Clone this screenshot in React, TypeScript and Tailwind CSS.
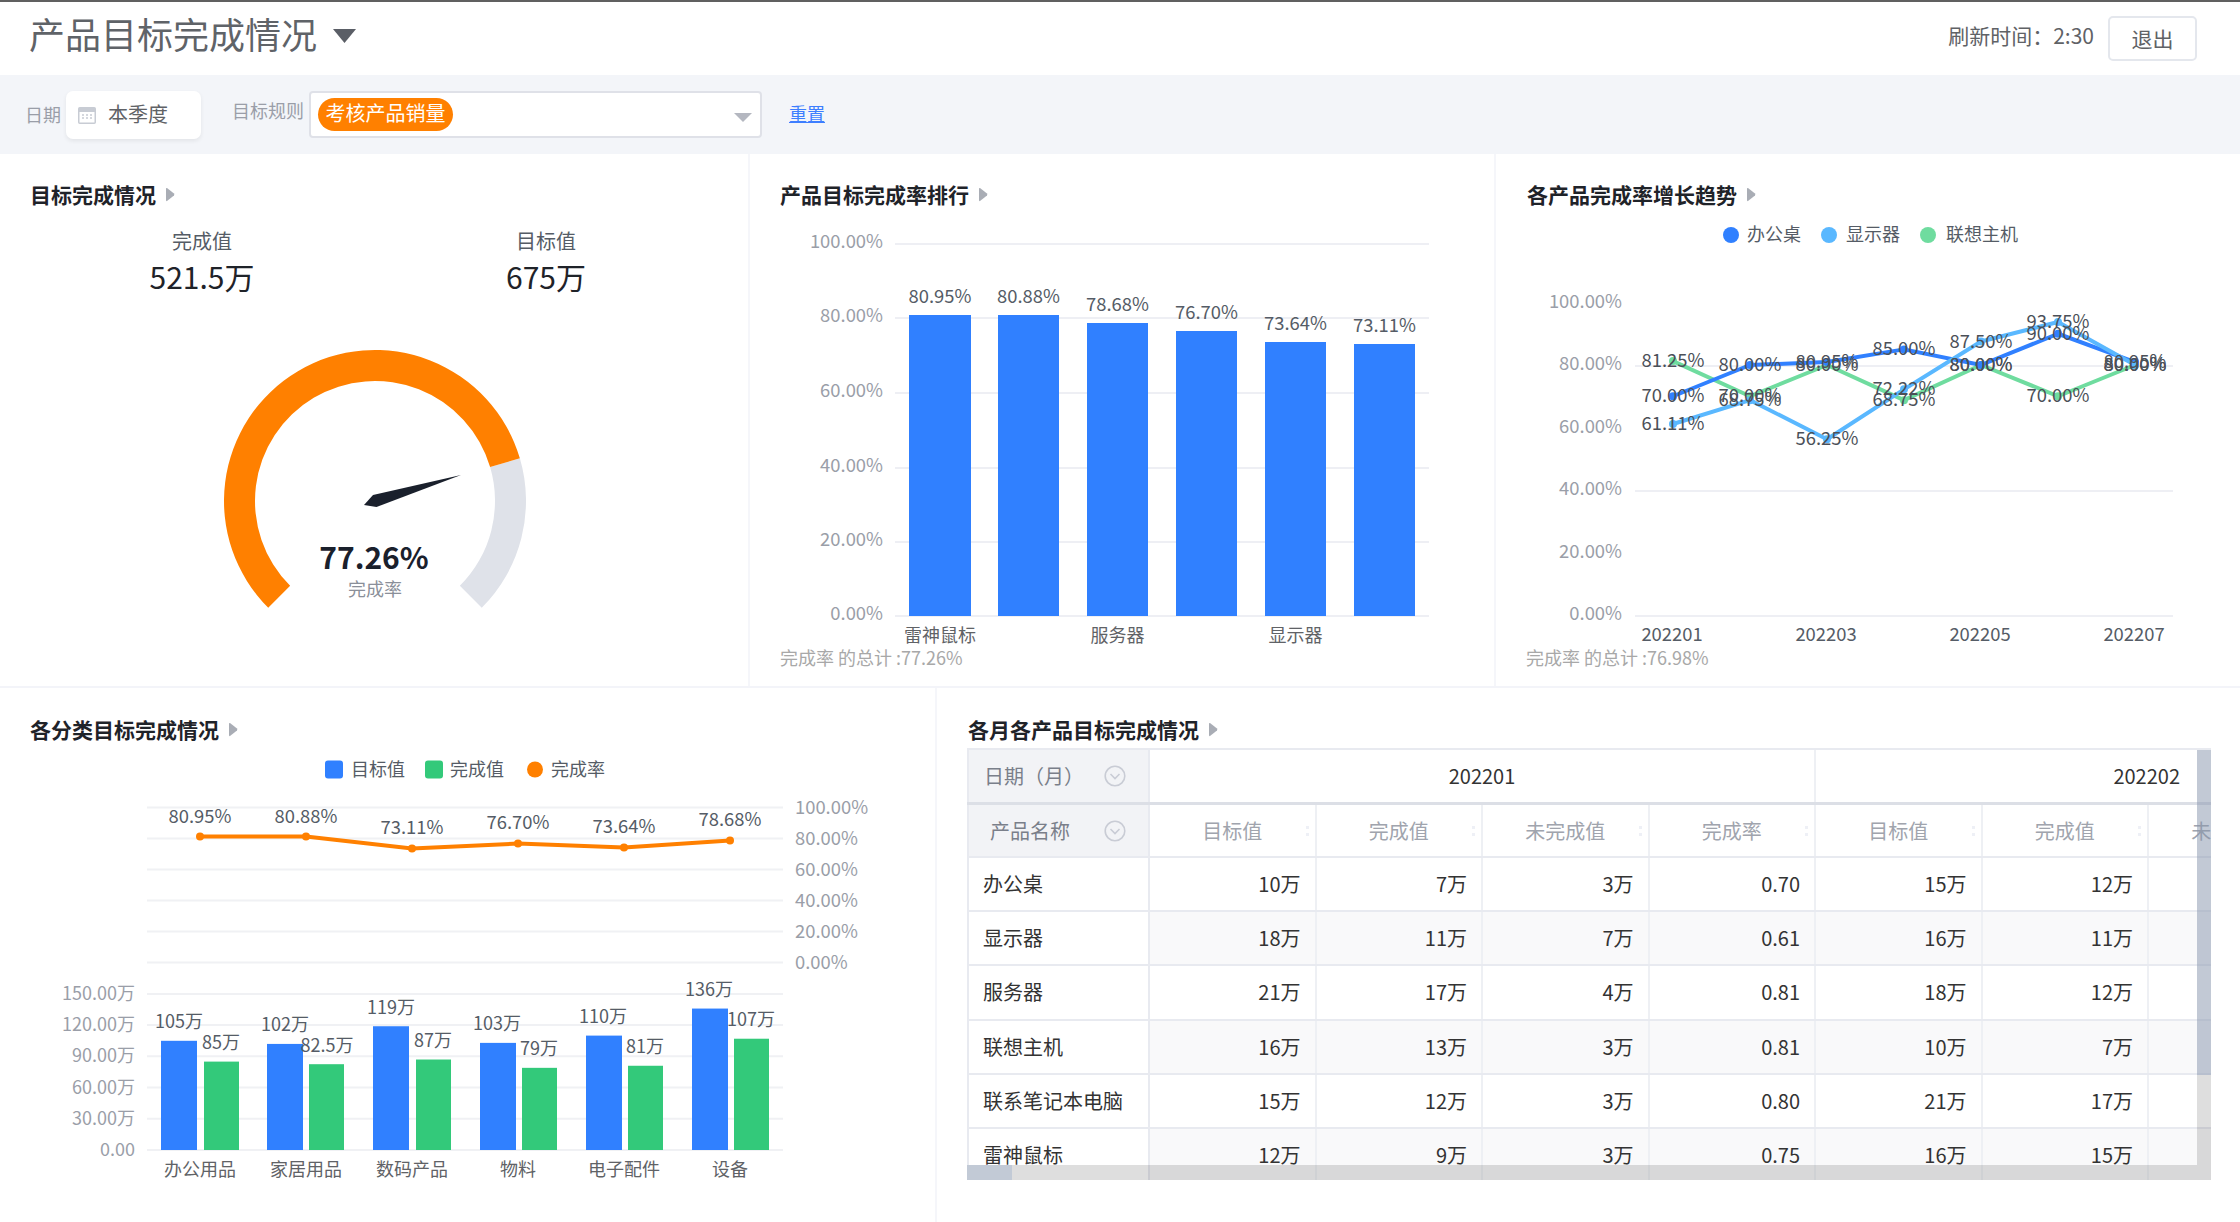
import React from "react";

const BLUE = "#3080ff";
const SKY = "#5ab8ff";
const MINT = "#6fdc9f";
const GREEN = "#33c97a";
const ORANGE = "#ff8000";

function Caret() {
  return (
    <svg width="9" height="15" viewBox="0 0 9 15" className="ml-[10px] shrink-0">
      <path d="M1 1 L8 6.5 Q8.6 7.5 8 8.5 L1 14 Q0 14.5 0 13 V2 Q0 .5 1 1 Z" fill="#a9adb5" />
    </svg>
  );
}

function PanelTitle({ title, className }: { title: string; className: string }) {
  return (
    <div className={`flex items-center h-[30px] pb-[4px] text-[21px] leading-[26px] font-bold text-[#1f2329] ${className}`}>
      <span>{title}</span>
      <Caret />
    </div>
  );
}

function Txt({ x, y, children, anchor = "middle", size = 18, fill = "#555c66", weight }: { x: number; y: number; children: React.ReactNode; anchor?: "start" | "middle" | "end"; size?: number; fill?: string; weight?: number }) {
  return (
    <text x={x} y={y - 2} textAnchor={anchor} dominantBaseline="central" fontSize={size} fill={fill} fontWeight={weight}>
      {children}
    </text>
  );
}

function polar(cx: number, cy: number, r: number, deg: number) {
  const a = (deg * Math.PI) / 180;
  return [cx + r * Math.cos(a), cy - r * Math.sin(a)];
}

function arc(from: number, to: number) {
  const [cx, cy, R, r] = [375, 501, 151, 120];
  const [x1, y1] = polar(cx, cy, R, from);
  const [x2, y2] = polar(cx, cy, R, to);
  const [x3, y3] = polar(cx, cy, r, to);
  const [x4, y4] = polar(cx, cy, r, from);
  const large = from - to > 180 ? 1 : 0;
  return `M${x1} ${y1} A${R} ${R} 0 ${large} 1 ${x2} ${y2} L${x3} ${y3} A${r} ${r} 0 ${large} 0 ${x4} ${y4} Z`;
}

function Gauge() {
  return (
    <svg width="748" height="388" viewBox="0 298 748 388">
      <path d={arc(16.4, -45)} fill="#dfe2e9" />
      <path d={arc(225, 16.4)} fill={ORANGE} />
      <polygon points="461,475 373,495 364,505 376.5,507" fill="#1a202c" />
      <Txt x={374} y={558} size={30} weight={700} fill="#1a202c">77.26%</Txt>
      <Txt x={375} y={590} fill="#8a8f99">完成率</Txt>
    </svg>
  );
}

const rankBars = [
  { x: 909, w: 62, top: 315, label: "80.95%", ly: 297, name: "雷神鼠标" },
  { x: 998, w: 61, top: 315, label: "80.88%", ly: 297 },
  { x: 1087, w: 61, top: 323, label: "78.68%", ly: 305, name: "服务器" },
  { x: 1176, w: 61, top: 331, label: "76.70%", ly: 313 },
  { x: 1265, w: 61, top: 342, label: "73.64%", ly: 324, name: "显示器" },
  { x: 1354, w: 61, top: 344, label: "73.11%", ly: 326 },
];

function RankChart() {
  const ticks = [
    [244, "100.00%"],
    [318, "80.00%"],
    [393, "60.00%"],
    [468, "40.00%"],
    [542, "20.00%"],
    [616, "0.00%"],
  ] as const;
  return (
    <svg width="744" height="475" viewBox="750 211 744 475">
      {ticks.map(([y, t]) => (
        <g key={t}>
          <line x1={895} x2={1429} y1={y} y2={y} stroke="#eeeff4" strokeWidth={2} />
          <Txt x={883} y={y - 2.5} anchor="end" size={18.4} fill="#9a9ea8">{t}</Txt>
        </g>
      ))}
      {rankBars.map((b) => (
        <g key={b.x}>
          <rect x={b.x} y={b.top} width={b.w} height={616 - b.top} fill={BLUE} />
          <Txt x={b.x + b.w / 2} y={b.ly} size={18.4}>{b.label}</Txt>
          {b.name && <Txt x={b.x + b.w / 2} y={636} fill="#606266">{b.name}</Txt>}
        </g>
      ))}
      <Txt x={780} y={659} anchor="start" fill="#a8a8a8">完成率 的总计 :77.26%</Txt>
    </svg>
  );
}

const months = [1673, 1750, 1827, 1904, 1981, 2058, 2135];
const series = [
  { color: MINT, values: [81.25, 70, 80, 68.75, 80, 70, 80] },
  { color: BLUE, values: [70, 80, 80.95, 85, 80, 90, 80.95] },
  { color: SKY, values: [61.11, 68.75, 56.25, 72.22, 87.5, 93.75, 80] },
];

function TrendChart() {
  const y = (v: number) => 616 - v * 3.125;
  const ticks = [
    [100, "100.00%"],
    [80, "80.00%"],
    [60, "60.00%"],
    [40, "40.00%"],
    [20, "20.00%"],
    [0, "0.00%"],
  ] as const;
  return (
    <svg width="744" height="475" viewBox="1496 211 744 475">
      <circle cx={1731} cy={235} r={8} fill={BLUE} />
      <Txt x={1747} y={235} anchor="start">办公桌</Txt>
      <circle cx={1829} cy={235} r={8} fill={SKY} />
      <Txt x={1846} y={235} anchor="start">显示器</Txt>
      <circle cx={1928} cy={235} r={8} fill={MINT} />
      <Txt x={1946} y={235} anchor="start">联想主机</Txt>
      {ticks.map(([v, t]) => (
        <g key={t}>
          {(v === 80 || v === 40 || v === 0) && <line x1={1635} x2={2173} y1={y(v)} y2={y(v)} stroke="#eeeff4" strokeWidth={2} />}
          <Txt x={1622} y={y(v) - 2} anchor="end" size={18.4} fill="#9a9ea8">{t}</Txt>
        </g>
      ))}
      {series.map((s) => (
        <g key={s.color}>
          <polyline points={s.values.map((v, i) => `${months[i]},${y(v) - 1}`).join(" ")} fill="none" stroke={s.color} strokeWidth={4} strokeLinejoin="round" />
          {s.values.map((v, i) => (
            <circle key={i} cx={months[i]} cy={y(v) - 1} r={4} fill={s.color} />
          ))}
        </g>
      ))}
      {series.map((s) =>
        s.values.map((v, i) => (
          <Txt key={s.color + i} x={months[i]} y={y(v) - 1} size={18.4} fill="#4b5058">{v.toFixed(2)}%</Txt>
        ))
      )}
      {[0, 2, 4, 6].map((i) => (
        <Txt key={i} x={months[i] - 1} y={635} size={18.4} fill="#555c66">{`20220${i + 1}`}</Txt>
      ))}
      <Txt x={1526} y={659} anchor="start" fill="#a8a8a8">完成率 的总计 :76.98%</Txt>
    </svg>
  );
}

const cats = [
  { name: "办公用品", cx: 200, bx: 161, gx: 204, target: 105, done: 85, doneText: "85万", rate: "80.95%", ry: 838, rl: 818, tl: 179, dl: 221 },
  { name: "家居用品", cx: 306, bx: 267, gx: 309, target: 102, done: 82.5, doneText: "82.5万", rate: "80.88%", ry: 838, rl: 818, tl: 285, dl: 327 },
  { name: "数码产品", cx: 412, bx: 373, gx: 416, target: 119, done: 87, doneText: "87万", rate: "73.11%", ry: 850, rl: 829, tl: 391, dl: 433 },
  { name: "物料", cx: 518, bx: 480, gx: 522, target: 103, done: 79, doneText: "79万", rate: "76.70%", ry: 845, rl: 824, tl: 497, dl: 539 },
  { name: "电子配件", cx: 624, bx: 586, gx: 628, target: 110, done: 81, doneText: "81万", rate: "73.64%", ry: 849, rl: 828, tl: 603, dl: 645 },
  { name: "设备", cx: 730, bx: 692, gx: 734, target: 136, done: 107, doneText: "107万", rate: "78.68%", ry: 842, rl: 821, tl: 709, dl: 751 },
];

function ComboChart() {
  const base = 1151.5;
  const h = (v: number) => v * 1.04;
  const top = [
    [809, "100.00%"],
    [840, "80.00%"],
    [871, "60.00%"],
    [902, "40.00%"],
    [933, "20.00%"],
    [964, "0.00%"],
  ] as const;
  const left = [
    [995.5, "150.00万"],
    [1026.6, "120.00万"],
    [1057.8, "90.00万"],
    [1089, "60.00万"],
    [1120.2, "30.00万"],
    [1151.5, "0.00"],
  ] as const;
  return (
    <svg width="935" height="476" viewBox="0 747.5 935 476">
      <rect x={325} y={762} width={18} height={18} rx={3} fill={BLUE} />
      <Txt x={351} y={771} anchor="start">目标值</Txt>
      <rect x={425} y={762} width={18} height={18} rx={3} fill={GREEN} />
      <Txt x={450} y={771} anchor="start">完成值</Txt>
      <circle cx={535} cy={771} r={8} fill={ORANGE} />
      <Txt x={551} y={771} anchor="start">完成率</Txt>
      {top.map(([y, t]) => (
        <g key={t}>
          <line x1={147} x2={783} y1={y} y2={y} stroke="#f0f1f4" strokeWidth={2} />
          <Txt x={795} y={y} anchor="start" size={18.4} fill="#9a9ea8">{t}</Txt>
        </g>
      ))}
      {left.map(([y, t]) => (
        <g key={t}>
          <line x1={147} x2={783} y1={y} y2={y} stroke="#f0f1f4" strokeWidth={2} />
          <Txt x={135} y={y} anchor="end" fill="#9a9ea8">{t}</Txt>
        </g>
      ))}
      <polyline points={cats.map((c) => `${c.cx},${c.ry}`).join(" ")} fill="none" stroke={ORANGE} strokeWidth={4} />
      {cats.map((c) => (
        <g key={c.name}>
          <circle cx={c.cx} cy={c.ry} r={4} fill={ORANGE} />
          <Txt x={c.cx} y={c.rl} size={18.4}>{c.rate}</Txt>
          <rect x={c.bx} y={base - h(c.target)} width={36} height={h(c.target)} fill={BLUE} />
          <rect x={c.gx} y={base - h(c.done)} width={35} height={h(c.done)} fill={GREEN} />
          <Txt x={c.tl} y={base - h(c.target) - 18.5}>{`${c.target}万`}</Txt>
          <Txt x={c.dl} y={base - h(c.done) - 18.5}>{c.doneText}</Txt>
          <Txt x={c.cx} y={1171.5} fill="#606266">{c.name}</Txt>
        </g>
      ))}
    </svg>
  );
}

function CircleChevron() {
  return (
    <svg width="22" height="22" viewBox="0 0 22 22" className="absolute right-[22px] top-1/2 -translate-y-1/2">
      <circle cx="11" cy="11" r="9.8" fill="none" stroke="#c9ccd5" strokeWidth="1.6" />
      <path d="M6.5 9 L11 13.5 L15.5 9" fill="none" stroke="#c9ccd5" strokeWidth="1.6" />
    </svg>
  );
}

const rows = [
  ["办公桌", "10万", "7万", "3万", "0.70", "15万", "12万"],
  ["显示器", "18万", "11万", "7万", "0.61", "16万", "11万"],
  ["服务器", "21万", "17万", "4万", "0.81", "18万", "12万"],
  ["联想主机", "16万", "13万", "3万", "0.81", "10万", "7万"],
  ["联系笔记本电脑", "15万", "12万", "3万", "0.80", "21万", "17万"],
  ["雷神鼠标", "12万", "9万", "3万", "0.75", "16万", "15万"],
];
const heads = ["目标值", "完成值", "未完成值", "完成率", "目标值", "完成值", "未完成值"];

function PivotTable() {
  return (
    <div className="relative mt-[2px] ml-[30px] w-[1244px] h-[432px] overflow-hidden border-t-2 border-[#e8eaf0] text-[20px] text-[#333]">
      <div className="flex h-[55px] border-b-[3px] border-[#dcdfe6]">
        <div className="relative flex items-center w-[183px] shrink-0 pl-[15px] bg-[#f2f3f6] border-l-2 border-r-2 border-[#e8eaf0] text-[#7a7f8a]">
          日期（月）
          <CircleChevron />
        </div>
        <div className="flex items-center justify-center w-[666px] shrink-0 border-r-2 border-[#eef0f4] text-[#333]">202201</div>
        <div className="flex items-center justify-end flex-1 pr-[31px] text-[#333]">202202</div>
      </div>
      <div className="flex h-[53px] border-b-2 border-[#e8eaf0]">
        <div className="relative flex items-center w-[183px] shrink-0 pl-[21px] bg-[#f2f3f6] border-l-2 border-r-2 border-[#e8eaf0] text-[#7a7f8a]">
          产品名称
          <CircleChevron />
        </div>
        {heads.map((t, i) => (
          <div key={i} className="relative flex items-center justify-center w-[166.5px] shrink-0 border-r-2 border-[#eef0f4] text-[#a0a4ad] whitespace-nowrap">
            {t}
            <span className="absolute right-[6px] top-1/2 -translate-y-1/2 flex flex-col gap-[4px]">
              <i className="block w-[3px] h-[3px] bg-[#eef0f6]" />
              <i className="block w-[3px] h-[3px] bg-[#eef0f6]" />
            </span>
          </div>
        ))}
      </div>
      {rows.map((r, ri) => (
        <div key={r[0]} className="flex h-[54.2px] border-b-2 border-[#e8eaf0]">
          <div className="flex items-center w-[183px] shrink-0 pl-[14px] bg-white border-l-2 border-r-2 border-[#e8eaf0]">{r[0]}</div>
          {r.slice(1).map((v, i) => (
            <div key={i} className={`flex items-center justify-end w-[166.5px] shrink-0 pr-[14px] border-r-2 border-[#eef0f4] ${ri % 2 === 1 ? "bg-[#f9f9fa]" : "bg-white"}`}>{v}</div>
          ))}
          <div className={`w-[166.5px] shrink-0 ${ri % 2 === 1 ? "bg-[#f9f9fa]" : "bg-white"}`} />
        </div>
      ))}
      {/* scrollbars sit on top of the table */}
      <div className="absolute left-0 right-0 bottom-0 h-[15px] bg-black/[0.13]">
        <div className="w-[45px] h-full bg-[#c2cad6]" />
      </div>
      <div className="absolute right-0 top-0 bottom-[15px] w-[14px] flex flex-col">
        <div className="h-[325px] bg-[#8593ab]/50" />
        <div className="flex-1 bg-black/[0.13]" />
      </div>
    </div>
  );
}

export default function App() {
  return (
    <div className="w-[2240px] h-[1222px] flex flex-col overflow-hidden bg-white font-['Noto_Sans_CJK_SC','Noto_Sans',sans-serif]">
      {/* Header */}
      <header className="flex items-center justify-between h-[75px] border-t-2 border-[#606060] shrink-0">
        <div className="flex items-center pl-[29px] pb-[12px] text-[36px] text-[#5f6368]">
          产品目标完成情况
          <svg width="23" height="14" viewBox="0 0 23 14" className="ml-[16px] mt-[6px]">
            <polygon points="0,0 23,0 11.5,14" fill="#5a5e66" />
          </svg>
        </div>
        <div className="flex items-center pr-[43px]">
          <span className="text-[21px] text-[#606266] pb-[5px]">刷新时间：2:30</span>
          <button className="ml-[14px] w-[89px] h-[45px] border-2 border-[#e4e7ed] rounded-[5px] text-[21px] text-[#606266]">退出</button>
        </div>
      </header>

      {/* Filter bar */}
      <div className="flex items-center h-[79px] shrink-0 pl-[25px] bg-[#f3f5f9]">
        <span className="text-[18px] text-[#9a9ea8]">日期</span>
        <div className="flex items-center ml-[5px] w-[135px] h-[48px] pl-[12px] bg-white rounded-[7px] shadow-[0_2px_4px_rgba(0,0,0,0.07)]">
          <svg width="18" height="18" viewBox="0 0 18 18">
            <rect x=".75" y="1.75" width="16.5" height="15.5" rx="1" fill="none" stroke="#c8ccd4" strokeWidth="1.5" />
            <rect x="1" y="2" width="16" height="4" fill="#c8ccd4" />
            <path d="M4 9h2M8 9h2M12 9h2M4 12h2M8 12h2M12 12h2" stroke="#c8ccd4" strokeWidth="1.5" />
          </svg>
          <span className="ml-[12px] pb-[2px] text-[20px] text-[#606266]">本季度</span>
        </div>
        <span className="ml-[31px] mb-[9px] text-[18px] text-[#9a9ea8]">目标规则</span>
        <div className="relative flex items-center ml-[5px] w-[453px] h-[47px] pl-[7px] pb-[1px] bg-white border-2 border-[#dfe1e8] rounded-[4px]">
          <span className="flex items-center justify-center w-[135px] h-[33px] pb-[2px] rounded-full bg-[#ff8000] text-[20px] text-white">考核产品销量</span>
          <svg width="18" height="9" viewBox="0 0 18 9" className="absolute right-[8px] top-[20px]">
            <polygon points="0,0 18,0 9,9" fill="#b4b7c0" />
          </svg>
        </div>
        <span className="ml-[27px] mb-[2px] text-[18px] text-[#3d7eff] underline">重置</span>
      </div>

      {/* First row */}
      <div className="flex h-[534px] shrink-0 border-b-2 border-[#f3f4f9]">
        <section className="w-[750px] shrink-0 border-r-2 border-[#f5f6fa] pt-[27px]">
          <PanelTitle title="目标完成情况" className="pl-[30px]" />
          <div className="flex px-[30px] pt-[17px] text-center">
            <div className="flex-1">
              <div className="h-[26px] leading-[26px] text-[20px] text-[#555c66]">完成值</div>
              <div className="h-[44px] leading-[44px] text-[30px] text-[#1f2329]">521.5万</div>
            </div>
            <div className="flex-1">
              <div className="h-[26px] leading-[26px] text-[20px] text-[#555c66]">目标值</div>
              <div className="h-[44px] leading-[44px] text-[30px] text-[#1f2329]">675万</div>
            </div>
          </div>
          <Gauge />
        </section>
        <section className="w-[746px] shrink-0 border-r-2 border-[#f5f6fa] pt-[27px]">
          <PanelTitle title="产品目标完成率排行" className="pl-[30px]" />
          <RankChart />
        </section>
        <section className="flex-1 pt-[27px]">
          <PanelTitle title="各产品完成率增长趋势" className="pl-[31px]" />
          <TrendChart />
        </section>
      </div>

      {/* Second row */}
      <div className="flex flex-1 min-h-0">
        <section className="w-[937px] shrink-0 border-r-2 border-[#f5f6fa] pt-[28px]">
          <PanelTitle title="各分类目标完成情况" className="pl-[30px]" />
          <ComboChart />
        </section>
        <section className="flex-1 pt-[28px]">
          <PanelTitle title="各月各产品目标完成情况" className="pl-[31px]" />
          <PivotTable />
        </section>
      </div>
    </div>
  );
}
